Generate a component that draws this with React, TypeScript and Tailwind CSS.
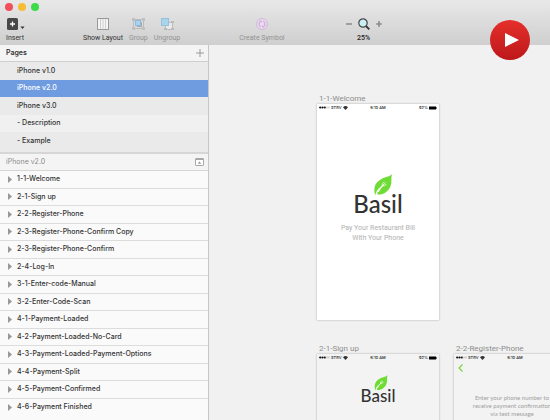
import React from "react";

const pages = ["iPhone v1.0", "iPhone v2.0", "iPhone v3.0", "- Description", "- Example"];
const layers = [
  "1-1-Welcome",
  "2-1-Sign up",
  "2-2-Register-Phone",
  "2-3-Register-Phone-Confirm Copy",
  "2-3-Register-Phone-Confirm",
  "2-4-Log-In",
  "3-1-Enter-code-Manual",
  "3-2-Enter-Code-Scan",
  "4-1-Payment-Loaded",
  "4-2-Payment-Loaded-No-Card",
  "4-3-Payment-Loaded-Payment-Options",
  "4-4-Payment-Split",
  "4-5-Payment-Confirmed",
  "4-6-Payment Finished",
];

function Tool({ label, tone, children }: { label: string; tone: string; children: React.ReactNode }) {
  return (
    <button className={`flex flex-col items-center gap-[2px] whitespace-nowrap ${tone}`}>
      <span className="flex h-3 items-center">{children}</span>
      <span>{label}</span>
    </button>
  );
}

function Toolbar() {
  return (
    <header className="h-[45px] shrink-0 bg-linear-to-b from-[#e8e8e8] to-[#cfcfcf]">
      <div className="flex h-[14px] items-center gap-[5px] pl-[5px]">
        <button aria-label="Close" className="size-2 rounded-full bg-[#f15059]" />
        <button aria-label="Minimize" className="size-2 rounded-full bg-[#f6bd35]" />
        <button aria-label="Zoom window" className="size-2 rounded-full bg-[#3ddb49]" />
      </div>
      <div className="flex items-start pl-[6px] pt-1 font-['Roboto',sans-serif] text-[7px] leading-[12px]">
        <div className="w-[77px]">
          <button className="flex flex-col items-start gap-[2px] text-[#333]">
            <span className="flex h-3 items-center">
              <svg width="20" height="12" viewBox="0 0 20 12" aria-hidden="true">
                <rect x="1" y="0" width="11" height="12" rx="1.5" fill="#484848" />
                <path d="M6.500 3.500v5M4 6h5" stroke="#fff" strokeWidth="1.300" />
                <path d="M14.500 8.500h4l-2 2.500z" fill="#333" />
              </svg>
            </span>
            <span>Insert</span>
          </button>
        </div>
        <div className="flex gap-[6px]">
          <Tool label="Show Layout" tone="text-[#333]">
            <svg width="12" height="12" viewBox="0 0 12 12" aria-hidden="true">
              <rect x=".5" y=".5" width="11" height="11" fill="#f4f4f4" stroke="#999" />
              <path d="M3.500 1v10M6 1v10M8.500 1v10" stroke="#d0d0d0" />
            </svg>
          </Tool>
          <Tool label="Group" tone="text-[#929292]">
            <svg width="13" height="12" viewBox="0 0 13 12" fill="none" aria-hidden="true">
              <path d="M1.500 1.500h10v9h-10z" stroke="#bcbcbc" />
              <path d="M0 0h3v3H0zM10 0h3v3h-3zM0 9h3v3H0zM10 9h3v3h-3z" fill="#c0c0c0" />
              <rect x="5.500" y="4.500" width="4" height="4" fill="#eee" stroke="#aaa" />
              <rect x="3.500" y="2.500" width="5" height="5" fill="#a9d4f0" stroke="#8dbbdd" />
            </svg>
          </Tool>
          <Tool label="Ungroup" tone="text-[#929292]">
            <svg width="14" height="12" viewBox="0 0 14 12" fill="none" aria-hidden="true">
              <rect x="5.500" y="4.500" width="7" height="7" fill="#e9e9e9" stroke="#bcbcbc" />
              <path d="M4 10h3v2H4zM11 10h3v2h-3zM11 3h3v2h-3z" fill="#bbb" />
              <rect x="1.500" y=".5" width="7" height="7" fill="#a9d4f0" stroke="#99bfdb" />
            </svg>
          </Tool>
        </div>
        <div className="ml-[59px]">
          <Tool label="Create Symbol" tone="text-[#929292]">
            <svg width="12" height="12" viewBox="0 0 12 12" fill="none" aria-hidden="true">
              <circle cx="6" cy="6" r="5.400" fill="#eadcef" stroke="#d3b5dc" />
              <path d="M5 8.700A2.800 2.800 0 0 1 4.500 3.500M7 3.300a2.800 2.800 0 0 1 .5 5.200" stroke="#cda6da" strokeWidth="1.100" />
              <path d="M3.500 2.600h2.300v2.200zM8.500 9.400H6.200V7.200z" fill="#cda6da" />
            </svg>
          </Tool>
        </div>
        <div className="ml-[61px] flex flex-col items-center gap-[2px] text-[#222]">
          <div className="flex h-3 items-center gap-[6px]">
            <button aria-label="Zoom out" className="flex">
              <svg width="6" height="6" viewBox="0 0 6 6" aria-hidden="true"><path d="M0 3h6" stroke="#777" strokeWidth="1.200" /></svg>
            </button>
            <svg width="12" height="12" viewBox="0 0 12 12" aria-hidden="true">
              <path d="M8 8l3.300 3.300" stroke="#333" strokeWidth="1.800" />
              <circle cx="5" cy="5" r="4.200" fill="#c9eff5" stroke="#484848" strokeWidth="1.200" />
            </svg>
            <button aria-label="Zoom in" className="flex">
              <svg width="6" height="6" viewBox="0 0 6 6" aria-hidden="true"><path d="M0 3h6M3 0v6" stroke="#777" strokeWidth="1.200" /></svg>
            </button>
          </div>
          <span className="font-medium">25%</span>
        </div>
      </div>
    </header>
  );
}

function Sidebar() {
  return (
    <aside className="flex w-[209px] shrink-0 flex-col border-r border-[#c6c6c6] bg-[#fafafa] text-[7px] font-medium text-[#333]">
      <div className="flex h-[17px] shrink-0 items-center justify-between border-b border-[#cfcfcf] bg-[#f4f4f4] pl-[6px] pr-1">
        <h2 className="font-semibold">Pages</h2>
        <button aria-label="Add page">
          <svg width="8" height="8" viewBox="0 0 8 8" aria-hidden="true"><path d="M0 4h8M4 0v8" stroke="#999" /></svg>
        </button>
      </div>
      <div className="shrink-0 border-b-2 border-[#d6d6d6] bg-[#eaeaea] pb-[2px]">
        <ul className="grid h-[88px] auto-rows-fr">
          {pages.map((p, i) => (
            <li key={p} className={i === 1 ? "bg-[#6f9ce0] text-white" : i === 3 ? "bg-[#f0f0f0]" : "bg-[#eaeaea]"}>
              <button className="flex size-full items-center pl-[17px]">{p}</button>
            </li>
          ))}
        </ul>
      </div>
      <div className="flex h-[17px] shrink-0 items-center justify-between border-b border-[#d6d6d6] bg-[#f4f4f4] pl-[6px] pr-1 font-normal text-[#8b8b8b]">
        <h2>iPhone v2.0</h2>
        <button aria-label="Collapse layers">
          <svg width="9" height="8" viewBox="0 0 9 8" aria-hidden="true">
            <rect x=".5" y=".5" width="8" height="7" rx=".5" fill="#fff" stroke="#a8a8a8" />
            <path d="M1 1.500h7" stroke="#a8a8a8" />
            <path d="M4.500 3.200l1.700 2.500H2.800z" fill="#999" />
          </svg>
        </button>
      </div>
      <ul className="grid h-[245px] shrink-0 auto-rows-fr">
        {layers.map((l) => (
          <li key={l} className="border-b border-[#dcdcdc] last:border-b-0">
            <button className="flex size-full items-center gap-[5px] pl-2">
              <svg width="4" height="7" viewBox="0 0 4 7" aria-hidden="true"><path d="M0 0l4 3.500L0 7z" fill="#989898" /></svg>
              {l}
            </button>
          </li>
        ))}
      </ul>
    </aside>
  );
}

function StatusBar({ battery = true }: { battery?: boolean }) {
  return (
    <div className="grid h-[7px] grid-cols-3 items-center px-[2px] text-[4px] font-medium leading-[7px] text-[#222]">
      <span className="flex items-center gap-px whitespace-nowrap">
        <svg width="11" height="3" viewBox="0 0 11 3" aria-hidden="true">
          <g fill="#111"><circle cx="1.200" cy="1.500" r="1.100" /><circle cx="3.500" cy="1.500" r="1.100" /><circle cx="5.800" cy="1.500" r="1.100" /></g>
          <g fill="none" stroke="#aaa" strokeWidth=".4"><circle cx="8" cy="1.500" r=".8" /><circle cx="10" cy="1.500" r=".8" /></g>
        </svg>
        STRV
        <svg width="5" height="4" viewBox="0 0 5 4" aria-hidden="true"><path d="M0 1.200Q2.500-1 5 1.200L2.500 4z" fill="#333" /></svg>
      </span>
      <span className="text-center">6:10 AM</span>
      <span className="flex items-center justify-end gap-px">
        {battery && (
          <>
            92%
            <svg width="8" height="4" viewBox="0 0 8 4" aria-hidden="true"><path d="M0 .5h7v1h1v1H7v1H0z" fill="#000" /></svg>
          </>
        )}
      </span>
    </div>
  );
}

function Leaf({ className }: { className: string }) {
  return (
    <svg className={className} viewBox="0 0 20 23" aria-hidden="true">
      <path d="M19.500 0C17.500 3.500 7 3 2.500 10.500.2 14.500.8 18.500 1.800 22.500 2.500 19 4 16 6.800 13.800 5 16.500 4.300 19 4 21.500 9.500 22 15 19 17.500 13.500 19.800 8.500 18 4.500 19.500 0z" fill="#6fdc35" />
      <path d="M5 18.500C6 16 7.800 13.500 10.500 11.200" fill="none" stroke="#fff" strokeWidth="1.300" />
      <path d="M9.300 12.200c-.3-1.700.3-3 2-3.800M9.300 12.200c1.700.5 3.200 0 4-1.700M10.300 11.500l2.400-2.600" fill="none" stroke="#fff" strokeWidth=".8" />
    </svg>
  );
}

function Board({ name, className, children }: { name: string; className: string; children: React.ReactNode }) {
  return (
    <section className="w-[122px] shrink-0">
      <h3 className="h-[12px] whitespace-nowrap pl-[2px] font-['Roboto',sans-serif] text-[8px] leading-[13px] text-[#8d8d8d]">{name}</h3>
      <div className={`shadow-[0_0_2px_rgba(0,0,0,0.3)] ${className}`}>{children}</div>
    </section>
  );
}

function Canvas() {
  return (
    <main className="flex min-w-0 flex-1 flex-col gap-[22px] overflow-hidden bg-[#f1f1f1] pl-[108px] pt-[47px]">
      <Board name="1-1-Welcome" className="h-[216px] bg-white">
        <StatusBar />
        <div className="flex flex-col items-center pt-[63px]">
          <Leaf className="ml-[10px] h-[22px] w-[20px]" />
          <div className="-mt-[5px] font-['Lato',sans-serif] text-[24px] font-medium leading-[26px] text-[#333]">Basil</div>
          <p className="pt-[6px] text-center font-['Roboto',sans-serif] text-[7px] leading-[10px] text-[#b0b0b0]">
            Pay Your Restaurant Bill
            <br />
            With Your Phone
          </p>
        </div>
      </Board>
      <div className="flex gap-[15px]">
        <Board name="2-1-Sign up" className="h-[216px] bg-[#f3f3f3]">
          <StatusBar />
          <div className="flex flex-col items-center pt-[14px]">
            <Leaf className="ml-[6px] h-[16px] w-[14px]" />
            <div className="-mt-[5px] font-['Lato',sans-serif] text-[17px] font-medium leading-[20px] text-[#333]">Basil</div>
          </div>
        </Board>
        <Board name="2-2-Register-Phone" className="h-[216px] bg-[#f3f3f3]">
          <StatusBar battery={false} />
          <div className="pl-1 pt-[3px]">
            <button aria-label="Back" className="flex">
              <svg width="5" height="8" viewBox="0 0 5 8" fill="none" aria-hidden="true"><path d="M4.500.5L1 4l3.500 3.500" stroke="#6fd631" strokeWidth="1.100" /></svg>
            </button>
          </div>
          <p className="whitespace-nowrap pr-[6px] pt-[22px] text-center font-['Lato',sans-serif] text-[6px] leading-[8px] text-[#a0a0a0]">
            Enter your phone number to
            <br />
            receive payment confirmation
            <br />
            via text message
          </p>
        </Board>
      </div>
    </main>
  );
}

export default function App() {
  return (
    <div className="relative flex h-screen flex-col overflow-hidden font-['Inter',sans-serif]">
      <Toolbar />
      <div className="flex min-h-0 flex-1">
        <Sidebar />
        <Canvas />
      </div>
      <button aria-label="Play video" className="absolute right-5 top-5 flex size-10 items-center justify-center rounded-full bg-linear-to-b from-[#e52f2b] to-[#bd171b] pl-[3px]">
        <svg width="14" height="14" viewBox="0 0 14 14" aria-hidden="true"><path d="M0 0l14 7L0 14z" fill="#fff" /></svg>
      </button>
    </div>
  );
}
